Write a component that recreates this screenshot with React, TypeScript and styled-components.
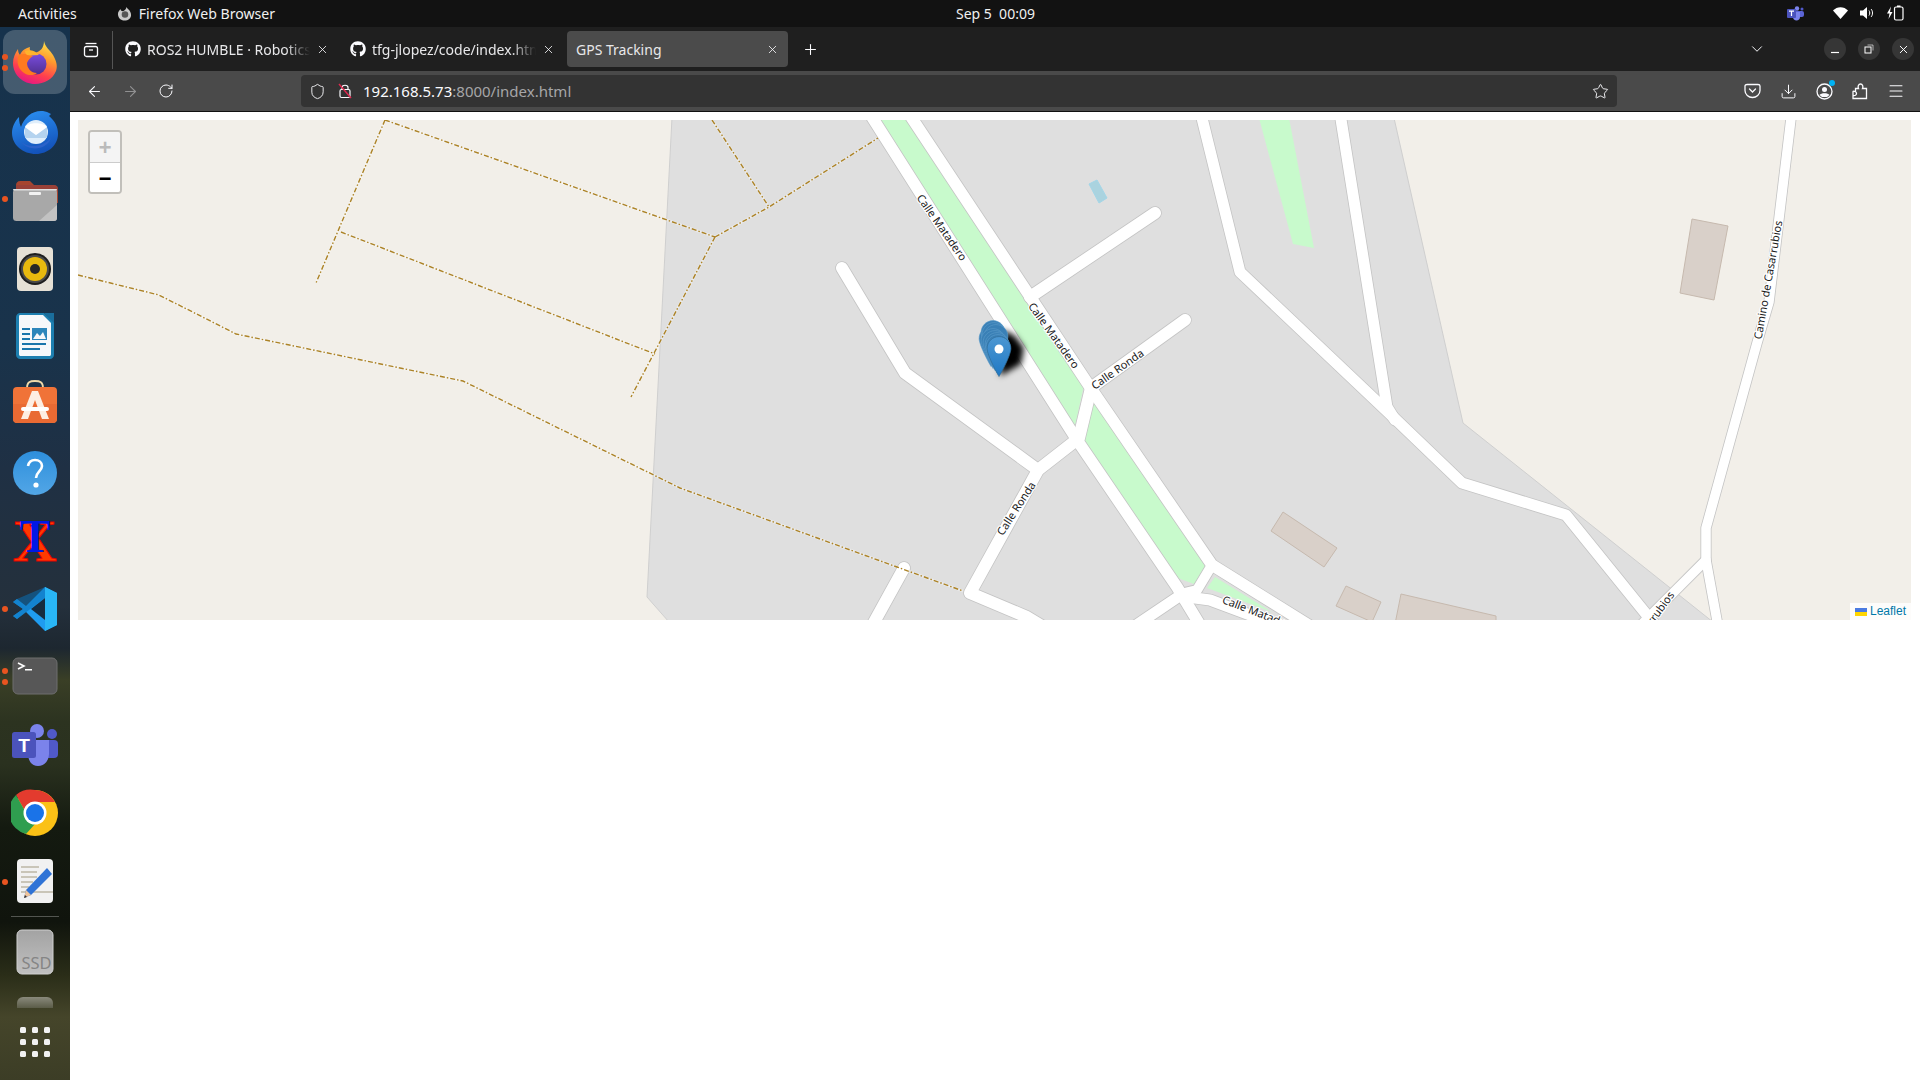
import React from 'react';
import styled, { createGlobalStyle } from 'styled-components';
import { ArrowLeft, ArrowRight, RotateCw, Plus, X, ChevronDown, Star, Download, Menu, Shield } from 'lucide-react';
import { FaGithub } from 'react-icons/fa';

const uiFont = `"Noto Sans", "Open Sans", "Liberation Sans", sans-serif`;

const GlobalStyle = createGlobalStyle`
  html, body {
    margin: 0;
    padding: 0;
    background: #fff;
  }
  #root {
    width: 1920px;
    height: 1080px;
  }
`;

const Screen = styled.div`
  width: 1920px;
  height: 1080px;
  display: flex;
  flex-direction: column;
  overflow: hidden;
  font-family: ${uiFont};
`;

/* ---------- gnome top bar ---------- */

const TopBar = styled.div`
  height: 27px;
  flex: none;
  box-sizing: border-box;
  background: #121212;
  color: #f0f0f0;
  font-size: 14.1px;
  display: grid;
  grid-template-columns: 938px auto 1fr;
  align-items: center;
  padding: 0 16px 1px 18px;
`;

const TopLeft = styled.div`
  display: flex;
  align-items: center;
`;

const AppName = styled.div`
  display: flex;
  align-items: center;
  gap: 7px;
  margin-left: 40px;
`;

const Clock = styled.div`
  white-space: pre;
  font-size: 14px;
`;

const TopRight = styled.div`
  display: flex;
  justify-content: flex-end;
  align-items: center;
  gap: 12px;
`;

const TraySpacer = styled.span`
  width: 5px;
`;

const Desktop = styled.div`
  flex: 1;
  display: flex;
  min-height: 0;
`;

/* ---------- ubuntu dock ---------- */

const Dock = styled.div`
  width: 70px;
  flex: none;
  padding-top: 1px;
  display: flex;
  flex-direction: column;
  align-items: stretch;
  position: relative;
  background: linear-gradient(
    180deg,
    #16324c 0%,
    #19334b 30%,
    #1f3044 42%,
    #24303c 55%,
    #1d2730 59%,
    #3a3f26 62%,
    #2c3320 66%,
    #2a311f 70%,
    #141a10 76%,
    #10140d 85%,
    #2a2d18 90%,
    #45452a 94%,
    #3c3d26 100%
  );
`;

const DockSlot = styled.div<{ $active?: boolean }>`
  height: 68.3px;
  flex: none;
  display: flex;
  align-items: center;
  justify-content: center;
  position: relative;

  ${(p) =>
    p.$active &&
    `
    &::before {
      content: '';
      position: absolute;
      left: 3px;
      top: 2px;
      width: 64px;
      height: 64px;
      border-radius: 12px;
      background: rgba(255, 255, 255, 0.2);
    }
  `}

  svg {
    position: relative;
  }
`;

const RunDots = styled.div`
  position: absolute;
  left: 2px;
  top: 0;
  bottom: 0;
  display: flex;
  flex-direction: column;
  justify-content: center;
  gap: 5px;
`;

const RunDot = styled.span`
  width: 6px;
  height: 6px;
  border-radius: 50%;
  background: #e95420;
`;

const DockDivider = styled.div`
  height: 1px;
  margin: 0 11px;
  background: rgba(255, 255, 255, 0.28);
  flex: none;
`;

const TrashStub = styled.div`
  width: 36px;
  height: 11px;
  margin: 12px auto 0;
  border-radius: 6px 6px 0 0;
  background: linear-gradient(180deg, #8a8a7c, #5b5c48);
`;

const GridButton = styled.div`
  display: grid;
  grid-template-columns: repeat(3, 6px);
  gap: 6px;
  justify-content: center;
  margin-top: 19px;
`;

const GridDot = styled.span`
  width: 6px;
  height: 6px;
  border-radius: 1.5px;
  background: #f2f2f2;
`;

/* ---------- firefox window ---------- */

const Browser = styled.div`
  flex: 1;
  min-width: 0;
  display: flex;
  flex-direction: column;
`;

const TabBar = styled.div`
  height: 44px;
  flex: none;
  background: #1f1f1f;
  display: flex;
  align-items: center;
  color: #fbfbfe;
`;

const ViewButton = styled.div`
  width: 42px;
  height: 38px;
  flex: none;
  margin: 2px 3px 0 0;
  display: flex;
  align-items: center;
  justify-content: center;
  border-right: 1px solid #555;
`;

const Tab = styled.div<{ $active?: boolean; $width: number }>`
  width: ${(p) => p.$width}px;
  height: 36px;
  flex: none;
  box-sizing: border-box;
  padding: 0 9px;
  margin-right: 3px;
  border-radius: 4px;
  display: flex;
  align-items: center;
  gap: 6px;
  font-size: 14px;
  background: ${(p) => (p.$active ? '#4b4b4b' : 'transparent')};
`;

const TabTitle = styled.div<{ $fade?: boolean }>`
  flex: 1;
  min-width: 0;
  white-space: nowrap;
  overflow: hidden;
  color: #e8e8ea;
  ${(p) =>
    p.$fade &&
    `
    -webkit-mask-image: linear-gradient(90deg, #000 85%, transparent 100%);
    mask-image: linear-gradient(90deg, #000 85%, transparent 100%);
  `}
`;

const TabBarSpacer = styled.div`
  flex: 1;
`;

const NewTab = styled.div`
  width: 36px;
  display: flex;
  justify-content: center;
  margin-left: 1px;
`;

const WindowButtons = styled.div`
  display: flex;
  gap: 12px;
  margin: 0 6px 0 58px;
`;

const WindowButton = styled.div`
  width: 22px;
  height: 22px;
  border-radius: 50%;
  background: #363636;
  display: flex;
  align-items: center;
  justify-content: center;
`;

const NavBar = styled.div`
  height: 40px;
  flex: none;
  box-sizing: content-box;
  background: #4a4a4a;
  border-bottom: 1px solid #111;
  display: flex;
  align-items: center;
  color: #fbfbfe;
`;

const NavButton = styled.div<{ $dim?: boolean }>`
  width: 36px;
  height: 32px;
  flex: none;
  display: flex;
  align-items: center;
  justify-content: center;
  opacity: ${(p) => (p.$dim ? 0.4 : 1)};
  position: relative;
`;

const NavLeft = styled.div`
  display: flex;
  width: 231px;
  flex: none;
  padding-left: 6px;
  box-sizing: border-box;
`;

const UrlBar = styled.div`
  width: 1316px;
  height: 32px;
  flex: none;
  background: #333;
  border-radius: 4px;
  display: flex;
  align-items: center;
  box-sizing: border-box;
  padding: 0 8px;
  font-size: 15px;
`;

const UrlIcons = styled.div`
  display: flex;
  align-items: center;
  gap: 11px;
  margin-right: 10px;
`;

const UrlHost = styled.span`
  color: #fbfbfe;
`;

const UrlPath = styled.span`
  color: #a6a6a8;
`;

const UrlStar = styled.div`
  margin-left: auto;
  display: flex;
`;

const NavRight = styled.div`
  display: flex;
  gap: 0;
  margin-left: 117px;
`;

const AccountBadge = styled.span`
  position: absolute;
  width: 6px;
  height: 6px;
  top: 5px;
  right: 7px;
  border-radius: 50%;
  background: #00b3f4;
`;

const Page = styled.div`
  flex: 1;
  background: #fff;
  padding: 8px 9px 0 8px;
`;

/* ---------- leaflet map ---------- */

const MapPane = styled.div`
  position: relative;
  height: 500px;
  overflow: hidden;
  background: #f2efe9;
`;

const MapCanvas = styled.svg`
  display: block;
  width: 100%;
  height: 100%;
`;

const ZoomControl = styled.div`
  position: absolute;
  left: 10px;
  top: 10px;
  width: 30px;
  border: 2px solid rgba(0, 0, 0, 0.2);
  border-radius: 4px;
  background-clip: padding-box;
  overflow: hidden;
`;

const ZoomButton = styled.div<{ $disabled?: boolean }>`
  height: 30px;
  box-sizing: border-box;
  padding-top: 5px;
  display: flex;
  align-items: center;
  justify-content: center;
  background: ${(p) => (p.$disabled ? '#f4f4f4' : '#fff')};
  color: ${(p) => (p.$disabled ? '#bbb' : '#000')};
  font: bold 22px 'Liberation Mono', monospace;
  & + & {
    border-top: 1px solid #ccc;
  }
`;

const Attribution = styled.div`
  position: absolute;
  right: 0;
  bottom: 0;
  padding: 0 5px;
  background: rgba(255, 255, 255, 0.8);
  font: 12px/17px 'Liberation Sans', Arial, sans-serif;
  color: #0078a8;
  display: flex;
  align-items: center;
  gap: 3px;
`;

const StreetLabel = styled.text`
  font-family: ${uiFont};
  font-size: 11px;
  fill: #1c1c1c;
  stroke: #fff;
  stroke-width: 2.4px;
  paint-order: stroke;
  stroke-linejoin: round;
  text-anchor: middle;
  dominant-baseline: middle;
`;

const roads: { d: string; w: number }[] = [
  { d: 'M867.500 110L1077 440L1177 587L1200 625', w: 11.500 },
  { d: 'M906.500 110L1090 387L1212 565L1310 626', w: 11.500 },
  { d: 'M1091 388L1079 438L1038 470L970 593L1027 617L1045 628', w: 12 },
  { d: 'M1092 387L1185 320', w: 12 },
  { d: 'M1030 297L1155 213', w: 12 },
  { d: 'M842 268L905 373L1038 470', w: 12 },
  { d: 'M904 568L872 626', w: 12 },
  { d: 'M1212 565L1197 590L1180 594', w: 10 },
  { d: 'M1180 596L1210 600L1290 630', w: 11 },
  { d: 'M1178 597L1135 626', w: 11 },
  { d: 'M1200 110L1240 272L1389 413L1462 483L1566 515L1655 625', w: 11 },
  { d: 'M1339.500 110L1387 407L1395 420', w: 11 },
  { d: 'M1792 110L1769 302L1757 343L1706 528L1706 560L1718 626', w: 9.500 },
  { d: 'M1706 560L1640 626', w: 9.500 },
];

const tracks = [
  'M385 120L715 237',
  'M385 120L316 283',
  'M341 232L655 354',
  'M715 237L631 397',
  'M712 120L769 207',
  'M715 237L769 207L878 138',
  'M78 275L159 295L236 334L463 381L680 488L897 567L963 591',
];

const buildings = [
  '1283,512 1337,548 1324,567 1271,531',
  '1346,586 1381,602 1372,622 1336,606',
  '1401,594 1496,616 1496,624 1395,624',
  '1692,219 1728,226 1714,300 1680,293',
];

const greens = [
  '875,118 907,118 1084,385 1075,426',
  '1095,400 1210,565 1194,584 1175,577 1082,438',
  '1207,588 1215,577 1272,612',
  '1259,118 1289,118 1314,248 1293,244',
];

const labels: { text: string; x: number; y: number; r: number }[] = [
  { text: 'Calle Matadero', x: 941, y: 228, r: 55 },
  { text: 'Calle Matadero', x: 1053, y: 336, r: 54 },
  { text: 'Calle Ronda', x: 1118, y: 370, r: -35 },
  { text: 'Calle Ronda', x: 1017, y: 509, r: -57 },
  { text: 'Calle Matadero', x: 1259, y: 614, r: 21 },
  { text: 'Camino de Casarrubios', x: 1769, y: 280, r: -80 },
  { text: 'Camino de Casarrubios', x: 1637, y: 642, r: -54 },
];

const PIN = 'M12.5 .6C5.9 .6 .6 5.9 .6 12.5C.6 20 12.5 40.5 12.5 40.5S24.4 20 24.4 12.5C24.4 5.9 19.1 .6 12.5 .6Z';
// older positions of the tracked robot, offsets from the newest marker
const pinTrail = [
  [-8, -10],
  [-6, -16],
  [-5, -14],
  [-3, -12],
  [-6, -8],
  [-4, -6],
  [-2, -4],
  [-1, -2],
];

function GpsMap() {
  return (
    <MapCanvas viewBox="78 120 1833 500">
      <defs>
        <linearGradient id="pinTop" x1="0" y1="0" x2="0" y2="1">
          <stop offset="0" stopColor="#4c97d2" />
          <stop offset="1" stopColor="#1f78c4" />
        </linearGradient>
        <filter id="pinShadow" x="-50%" y="-50%" width="200%" height="200%">
          <feGaussianBlur stdDeviation="3" />
        </filter>
      </defs>
      <polygon
        points="672,118 1394,118 1463,423 1713,622 669,622 647,597"
        fill="#dfdfdf"
        stroke="#cfcfcf"
      />
      {greens.map((p) => (
        <polygon key={p} points={p} fill="#c8facc" />
      ))}
      <polygon points="1089,184 1097,180 1107,198 1099,203" fill="#aad3df" stroke="#a3d6e8" />
      {buildings.map((p) => (
        <polygon key={p} points={p} fill="#d9d0c9" stroke="#c6b9ae" />
      ))}
      <g fill="none" strokeLinecap="round" strokeLinejoin="round">
        {roads.map((r) => (
          <path key={r.d + 'c'} d={r.d} stroke="#c4c4c4" strokeWidth={r.w + 1.6} />
        ))}
        {roads.map((r) => (
          <path key={r.d} d={r.d} stroke="#fff" strokeWidth={r.w} />
        ))}
      </g>
      <g fill="none">
        {tracks.map((d) => (
          <path key={d + 'h'} d={d} stroke="#fff" strokeOpacity={0.35} strokeWidth={2.6} />
        ))}
        {tracks.map((d) => (
          <path key={d} d={d} stroke="#ac8327" strokeWidth={1.4} strokeDasharray="5 2 1.5 2" />
        ))}
      </g>
      {labels.map((l) => (
        <StreetLabel key={l.x} x={l.x} y={l.y} transform={`rotate(${l.r} ${l.x} ${l.y})`}>
          {l.text}
        </StreetLabel>
      ))}
      <polygon
        points="1000,376 1021,364 1024,348 1015,336 1003,330"
        fill="#000"
        filter="url(#pinShadow)"
      />
      {pinTrail.map(([dx, dy]) => (
        <path
          key={`${dx}${dy}`}
          d={PIN}
          transform={`translate(${986.5 + dx} ${336 + dy})`}
          fill="#3a80b6"
          stroke="#5c9ccb"
          strokeWidth={0.6}
        />
      ))}
      <g transform="translate(986.5 336)">
        <path d={PIN} fill="url(#pinTop)" stroke="#2e6c97" strokeWidth={0.7} />
        <circle cx="12.5" cy="13" r="4.5" fill="#fff" />
      </g>
    </MapCanvas>
  );
}

/* ---------- dock icons ---------- */

const FirefoxIcon = () => (
  <svg width="48" height="48" viewBox="0 0 48 48">
    <defs>
      <linearGradient id="ffBody" x1="0.7" y1="0" x2="0.3" y2="1">
        <stop offset="0" stopColor="#ffe14a" />
        <stop offset="0.35" stopColor="#ff9a2e" />
        <stop offset="0.7" stopColor="#ff3f4e" />
        <stop offset="1" stopColor="#e31587" />
      </linearGradient>
      <linearGradient id="ffCore" x1="0.5" y1="0" x2="0.5" y2="1">
        <stop offset="0" stopColor="#7a4de0" />
        <stop offset="1" stopColor="#50308f" />
      </linearGradient>
    </defs>
    <path
      d="M33 3C34 9 39 12 42 17C45 22 47 28 45 33C42 41 33 46 24 46C12 46 2 37 2 25C2 20 4 15 7 11C7 14 8 16 9 17C11 12 15 10 19 9C18 12 20 14 23 15C30 14 33 9 33 3Z"
      fill="url(#ffBody)"
    />
    <circle cx="25" cy="26" r="10.5" fill="url(#ffCore)" />
    <path
      d="M8 17C12 15 18 16 22 18C19 20 17 22 16 25C16 30 20 35 26 35C21 39 13 37 9 31C6 26 6 21 8 17Z"
      fill="#ff7a1f"
    />
    <path d="M14 13C19 11 25 13 28 17C24 17 19 18 16 17C15 16 14 15 14 13Z" fill="#ffb32c" />
  </svg>
);

const ThunderbirdIcon = () => (
  <svg width="48" height="48" viewBox="0 -2 48 48">
    <defs>
      <linearGradient id="tbBlue" x1="0.3" y1="0" x2="0.6" y2="1">
        <stop offset="0" stopColor="#2a8ef0" />
        <stop offset="1" stopColor="#1250b8" />
      </linearGradient>
    </defs>
    <path
      d="M8 9C8 14 9 17 10 19C13 9 22 2 32 3L36 4L40 6L38 8C44 13 47 19 47 26C47 37 37 46 25 46C12 46 1 37 1 25C1 19 4 13 8 9Z"
      fill="url(#tbBlue)"
    />
    <circle cx="25" cy="24" r="12" fill="#dfeefb" />
    <path d="M14 19L25 27L36 19L36 30L14 30Z" fill="#b4d3ef" />
    <path d="M14 19C18 14 32 14 36 19L25 27Z" fill="#fff" />
    <path d="M10 34C16 39 30 41 40 30C36 42 18 44 10 34Z" fill="#2b62c9" />
  </svg>
);

const FilesIcon = () => (
  <svg width="48" height="48" viewBox="0 -2 48 48">
    <path
      d="M5 8C5 5.800 6.800 4 9 4H19L23 8H43C45 8 47 9.500 47 12V26H5Z"
      fill="#a6452f"
    />
    <path d="M5 8H23L43 8C45 8 47 9 47 12V14H5Z" fill="#91403f" opacity="0.6" />
    <rect x="2" y="12" width="44" height="32" rx="3.500" fill="#a8a8a8" />
    <rect x="2" y="12" width="44" height="1.500" rx="0.700" fill="#e0e0e0" />
    <path d="M46 28V41C46 43 45 44 43 44H28Z" fill="#c2c2c2" />
    <rect x="18" y="15" width="12" height="3" rx="1" fill="#f2f2f2" />
  </svg>
);

const RhythmboxIcon = () => (
  <svg width="48" height="48" viewBox="0 -2 48 48">
    <rect x="6" y="2" width="36" height="44" rx="4" fill="#e6e1d6" />
    <circle cx="24" cy="24" r="16" fill="#1e1e1e" />
    <circle cx="24" cy="24" r="14" fill="#4a4a4a" />
    <circle cx="24" cy="24" r="12" fill="#e8b90e" />
    <circle cx="24" cy="24" r="5" fill="#272727" />
  </svg>
);

const WriterIcon = () => (
  <svg width="48" height="48" viewBox="0 -1 48 48">
    <path d="M9 1H33L43 10V43C43 45 41 47 39 47H9C7 47 5 45 5 43V5C5 3 7 1 9 1Z" fill="#1d7fb0" />
    <path d="M9 3H32L40 11V42C40 43.500 39.500 44 38 44H10C8.500 44 8 43.500 8 42V5C8 3.500 8.500 3 9 3Z" fill="#f6f8fa" />
    <path d="M33 1L43 1V11Z" fill="#1a6e9c" />
    <rect x="11" y="16" width="8" height="2" fill="#1a76ac" />
    <rect x="11" y="21" width="8" height="2" fill="#1a76ac" />
    <rect x="11" y="26" width="8" height="2" fill="#1a76ac" />
    <rect x="11" y="31" width="24" height="2" fill="#1a76ac" />
    <rect x="11" y="36" width="18" height="2" fill="#1a76ac" />
    <rect x="21" y="16" width="15" height="12" fill="#2c86bb" />
    <path d="M22 27L26 21L29 24L32 20L35 27Z" fill="#f6f8fa" />
  </svg>
);

const AppStoreIcon = () => (
  <svg width="48" height="48" viewBox="0 0 48 48">
    <path d="M16 8C16 2 19 1 24 1C29 1 32 2 32 8" fill="none" stroke="#efd9a9" strokeWidth="1.800" />
    <rect x="2" y="7" width="44" height="36" rx="4" fill="#f07338" />
    <path d="M2 24H46V39C46 41 44 43 42 43H6C4 43 2 41 2 39Z" fill="#e96a33" />
    <path d="M21 11H27L38 39H31L24 20L17 39H10Z" fill="#fdeee3" />
    <rect x="10" y="27" width="28" height="4" rx="2" fill="#fff" />
  </svg>
);

const HelpIcon = () => (
  <svg width="48" height="48" viewBox="0 -1 48 48">
    <defs>
      <linearGradient id="helpBlue" x1="0" y1="0" x2="0" y2="1">
        <stop offset="0" stopColor="#2e8fdc" />
        <stop offset="1" stopColor="#52a6e6" />
      </linearGradient>
    </defs>
    <circle cx="24" cy="24" r="22" fill="url(#helpBlue)" />
    <path
      d="M17 17C18 12 21 11 24 11C28 11 31 13.500 31 17C31 22 25 23 25 29"
      fill="none"
      stroke="#fff"
      strokeWidth="2.600"
    />
    <circle cx="25" cy="36" r="2.600" fill="#fff" />
  </svg>
);

const XournalIcon = () => (
  <svg width="48" height="48" viewBox="0 0 48 48">
    <text
      x="2"
      y="45"
      textLength="44"
      lengthAdjust="spacingAndGlyphs"
      fontFamily="Liberation Serif"
      fontWeight="bold"
      fontSize="60"
      fill="#ff3a00"
      stroke="#ee0000"
      strokeWidth="1"
    >
      X
    </text>
    <text
      x="24"
      y="36"
      textAnchor="middle"
      fontFamily="Liberation Serif"
      fontWeight="bold"
      fontSize="46"
      fill="#0018e6"
    >
      T
    </text>
  </svg>
);

const VsCodeIcon = () => (
  <svg width="48" height="48" viewBox="0 0 48 48">
    <path d="M34 2L46 8V40L34 46L15 27L6 34L2 31L12 24L2 17L6 14L15 21Z" fill="#1f9cf0" />
    <path d="M34 2L46 8V40L34 46Z" fill="#29b6f6" />
    <path d="M34 13V35L20 24Z" fill="#15202b" opacity="0.9" />
    <path d="M6 14L2 17L12 24L2 31L6 34L34 13V2Z" fill="#0a6fb5" opacity="0.55" />
  </svg>
);

const TerminalIcon = () => (
  <svg width="48" height="48" viewBox="0 -2 48 48">
    <rect x="2" y="3" width="44" height="36" rx="5" fill="#575757" stroke="#6e6e6e" />
    <path d="M7 8L13 11L7 14" fill="none" stroke="#fff" strokeWidth="1.600" />
    <rect x="14" y="14" width="7" height="1.500" fill="#fff" />
  </svg>
);

const TeamsIcon = () => (
  <svg width="48" height="48" viewBox="0 1 48 48">
    <circle cx="26" cy="11" r="7" fill="#7b83eb" />
    <circle cx="41" cy="14" r="5" fill="#5059c9" />
    <rect x="33" y="20" width="14" height="18" rx="4" fill="#5059c9" />
    <path d="M17 20H38V34C38 41 33 46 27 46C21 46 17 41 17 34Z" fill="#7b83eb" />
    <rect x="1" y="12" width="24" height="26" rx="2.500" fill="#4b53bc" />
    <text
      x="13"
      y="32"
      textAnchor="middle"
      fontFamily="Liberation Sans"
      fontWeight="bold"
      fontSize="19"
      fill="#fff"
    >
      T
    </text>
  </svg>
);

const ChromeIcon = () => (
  <svg width="48" height="48" viewBox="0 0 48 48">
    <circle cx="24" cy="24" r="23" fill="#fbc116" />
    <path d="M24 1A23 23 0 0 1 44 13H24A11 11 0 0 0 13.500 21L5 6A23 23 0 0 1 24 1Z" fill="#e33b2e" />
    <path d="M5 6L14 22A11 11 0 0 0 24 35L15 45A23 23 0 0 1 5 6Z" fill="#2f9e4f" />
    <circle cx="24" cy="24" r="11.500" fill="#fff" />
    <circle cx="24" cy="24" r="9" fill="#1a73e8" />
  </svg>
);

const GeditIcon = () => (
  <svg width="48" height="48" viewBox="0 1 48 48">
    <rect x="6" y="2" width="36" height="44" rx="4" fill="#f1f1f1" />
    <path d="M10 10H28M10 15H26M10 20H26M10 25H22M10 30H18M10 35H42" stroke="#c9c5b8" strokeWidth="1.800" />
    <path d="M36 11L41 17L20 38L13 41L15 33Z" fill="#2f73d6" />
    <path d="M15 33L20 38L13 41Z" fill="#eec39a" />
    <path d="M13 41L14 38L16 40Z" fill="#333" />
  </svg>
);

const SsdIcon = () => (
  <svg width="48" height="48" viewBox="0 -1 48 48">
    <defs>
      <linearGradient id="ssdBody" x1="0" y1="0" x2="0" y2="1">
        <stop offset="0" stopColor="#a3a3a3" />
        <stop offset="1" stopColor="#c0c0c0" />
      </linearGradient>
    </defs>
    <rect x="6" y="2" width="36" height="44" rx="5" fill="url(#ssdBody)" stroke="#d0d0d0" />
    <text x="10.500" y="41" fontFamily="Noto Sans" fontSize="16.500" fill="#858585">
      SSD
    </text>
  </svg>
);

const dockApps: { key: string; icon: React.ReactNode; dots?: number; active?: boolean }[] = [
  { key: 'firefox', icon: <FirefoxIcon />, dots: 2, active: true },
  { key: 'thunderbird', icon: <ThunderbirdIcon /> },
  { key: 'files', icon: <FilesIcon />, dots: 1 },
  { key: 'rhythmbox', icon: <RhythmboxIcon /> },
  { key: 'writer', icon: <WriterIcon /> },
  { key: 'store', icon: <AppStoreIcon /> },
  { key: 'help', icon: <HelpIcon /> },
  { key: 'xournal', icon: <XournalIcon /> },
  { key: 'vscode', icon: <VsCodeIcon />, dots: 1 },
  { key: 'terminal', icon: <TerminalIcon />, dots: 2 },
  { key: 'teams', icon: <TeamsIcon /> },
  { key: 'chrome', icon: <ChromeIcon /> },
  { key: 'gedit', icon: <GeditIcon />, dots: 1 },
];

/* ---------- small chrome icons ---------- */

const TinyFirefox = () => (
  <svg width="15" height="15" viewBox="0 0 16 16">
    <path d="M10 1C11 3 15 5 15 9.500C15 13 12 15.500 8 15.500C4 15.500 1 12.500 1 8.500C1 6 3 4 4 3.500C4 5 5 5.500 6 5.500C8 5 10 3.500 10 1Z" fill="#c9c9c9" />
    <circle cx="8.500" cy="9" r="3.500" fill="#555" />
  </svg>
);

const TeamsTray = () => (
  <svg width="17" height="15" viewBox="0 0 17 15">
    <circle cx="10" cy="2.500" r="2.200" fill="#7b83eb" />
    <circle cx="15" cy="3" r="1.500" fill="#5059c9" />
    <rect x="5" y="5" width="12" height="6" rx="2" fill="#5b64d6" />
    <path d="M6 6H13V11C13 13 11.500 14.500 9.500 14.500C7.500 14.500 6 13 6 11Z" fill="#7b83eb" />
    <rect x="0" y="3" width="9" height="9" rx="1" fill="#4b53bc" />
    <path d="M2 5.200H7M4.500 5.200V10" stroke="#fff" strokeWidth="1.200" />
  </svg>
);

const WifiTray = () => (
  <svg width="15" height="12" viewBox="0 0 15 12">
    <path d="M0 3.500C4 -1 11 -1 15 3.500L7.500 12Z" fill="#fff" />
  </svg>
);

const VolumeTray = () => (
  <svg width="15" height="14" viewBox="0 0 15 14">
    <path d="M0 4.500H3L7 1V13L3 9.500H0Z" fill="#fff" />
    <path d="M9 4.500C10 5.500 10 8.500 9 9.500M11 3C13 5 13 9 11 11" fill="none" stroke="#fff" strokeWidth="1" />
  </svg>
);

const BatteryTray = () => (
  <svg width="17" height="16" viewBox="0 0 17 16">
    <path d="M4 1.500L0 8.500H2.500L1.500 14L5.500 7H3Z" fill="#fff" />
    <rect x="7.500" y="2" width="8.500" height="13" rx="1.500" fill="none" stroke="#fff" strokeWidth="1.200" />
    <rect x="10" y="0.500" width="3.500" height="1.500" fill="#fff" />
  </svg>
);

const ViewIcon = () => (
  <svg width="16" height="16" viewBox="0 0 16 16" fill="none" stroke="#fbfbfe" strokeWidth="1.300">
    <path d="M2.500 1.500H13.500" />
    <rect x="1.500" y="4.500" width="13" height="10" rx="2" />
    <path d="M6 8H10" />
  </svg>
);

const LockOff = () => (
  <svg width="16" height="16" viewBox="0 0 16 16" fill="none" stroke="#fbfbfe" strokeWidth="1.200">
    <rect x="3" y="6.500" width="10" height="8" rx="1.500" />
    <path d="M5 6.500V4.500C5 1.500 11 1.500 11 4.500V6.500" />
    <path d="M2 1L14 15" stroke="#e22850" strokeWidth="1.400" />
  </svg>
);

const PocketIcon = () => (
  <svg width="17" height="16" viewBox="0 0 17 16" fill="none" stroke="#fbfbfe" strokeWidth="1.300">
    <path d="M1 3C1 2 2 1.500 3 1.500H14C15 1.500 16 2 16 3V7.500C16 11.500 12.500 14.500 8.500 14.500C4.500 14.500 1 11.500 1 7.500Z" />
    <path d="M5.500 6L8.500 9L11.500 6" strokeLinecap="round" />
  </svg>
);

const AccountIcon = () => (
  <svg width="17" height="17" viewBox="0 0 17 17">
    <circle cx="8.500" cy="8.500" r="7.500" fill="none" stroke="#fbfbfe" strokeWidth="1.300" />
    <circle cx="8.500" cy="6.500" r="2.500" fill="#fbfbfe" />
    <path d="M3.500 12C5 9.800 12 9.800 13.500 12L11 14H6Z" fill="#fbfbfe" />
  </svg>
);

const ExtensionIcon = () => (
  <svg width="16" height="17" viewBox="0 0 16 17" fill="none" stroke="#fbfbfe" strokeWidth="1.300">
    <path d="M1 8.500V15.500H14.500V5.500H10.500C11.500 3.500 10.500 1 8.500 1C6.500 1 5.500 3.500 6.500 5.500H3.500V8.500C2 8 1 8 1 8.500ZM1 8.500C3 8 4.500 9 4.500 10.500C4.500 12 3 13 1 12.500" />
  </svg>
);

const UkraineFlag = () => (
  <svg width="12" height="8" viewBox="0 0 12 8">
    <rect width="12" height="4" fill="#4c7be1" />
    <rect y="4" width="12" height="4" fill="#ffd500" />
  </svg>
);

export default function App() {
  return (
    <>
      <GlobalStyle />
      <Screen>
        <TopBar>
          <TopLeft>
            <span>Activities</span>
            <AppName>
              <TinyFirefox />
              <span>Firefox Web Browser</span>
            </AppName>
          </TopLeft>
          <Clock>Sep 5  00:09</Clock>
          <TopRight>
            <TeamsTray />
            <TraySpacer />
            <WifiTray />
            <VolumeTray />
            <BatteryTray />
          </TopRight>
        </TopBar>
        <Desktop>
          <Dock>
            {dockApps.map((app) => (
              <DockSlot key={app.key} $active={app.active}>
                {app.dots ? (
                  <RunDots>
                    {Array.from({ length: app.dots }).map((_, i) => (
                      <RunDot key={i} />
                    ))}
                  </RunDots>
                ) : null}
                {app.icon}
              </DockSlot>
            ))}
            <DockDivider />
            <DockSlot>
              <SsdIcon />
            </DockSlot>
            <TrashStub />
            <GridButton>
              {Array.from({ length: 9 }).map((_, i) => (
                <GridDot key={i} />
              ))}
            </GridButton>
          </Dock>
          <Browser>
            <TabBar>
              <ViewButton>
                <ViewIcon />
              </ViewButton>
              <Tab $width={222}>
                <FaGithub size={16} />
                <TabTitle $fade>ROS2 HUMBLE · Robotics</TabTitle>
                <X size={13} strokeWidth={1.5} />
              </Tab>
              <Tab $width={223}>
                <FaGithub size={16} />
                <TabTitle $fade>tfg-jlopez/code/index.html</TabTitle>
                <X size={13} strokeWidth={1.5} />
              </Tab>
              <Tab $active $width={221}>
                <TabTitle>GPS Tracking</TabTitle>
                <X size={13} strokeWidth={1.5} />
              </Tab>
              <NewTab>
                <Plus size={17} strokeWidth={1.5} />
              </NewTab>
              <TabBarSpacer />
              <ChevronDown size={18} strokeWidth={1.3} />
              <WindowButtons>
                <WindowButton>
                  <svg width="10" height="10" viewBox="0 0 10 10">
                    <path d="M1 8.500H9" stroke="#fff" strokeWidth="1.200" />
                  </svg>
                </WindowButton>
                <WindowButton>
                  <svg width="10" height="10" viewBox="0 0 10 10" fill="none" stroke="#fff">
                    <rect x="1" y="3" width="6" height="6" />
                    <path d="M3.500 1H9V6.500" strokeOpacity="0.6" />
                  </svg>
                </WindowButton>
                <WindowButton>
                  <X size={13} strokeWidth={1.8} color="#fff" />
                </WindowButton>
              </WindowButtons>
            </TabBar>
            <NavBar>
              <NavLeft>
                <NavButton>
                  <ArrowLeft size={17} strokeWidth={1.5} />
                </NavButton>
                <NavButton $dim>
                  <ArrowRight size={17} strokeWidth={1.5} />
                </NavButton>
                <NavButton>
                  <RotateCw size={16} strokeWidth={1.5} />
                </NavButton>
              </NavLeft>
              <UrlBar>
                <UrlIcons>
                  <Shield size={17} strokeWidth={1.3} />
                  <LockOff />
                </UrlIcons>
                <UrlHost>192.168.5.73</UrlHost>
                <UrlPath>:8000/index.html</UrlPath>
                <UrlStar>
                  <Star size={17} strokeWidth={1.3} />
                </UrlStar>
              </UrlBar>
              <NavRight>
                <NavButton>
                  <PocketIcon />
                </NavButton>
                <NavButton>
                  <Download size={17} strokeWidth={1.4} />
                </NavButton>
                <NavButton>
                  <AccountIcon />
                  <AccountBadge />
                </NavButton>
                <NavButton>
                  <ExtensionIcon />
                </NavButton>
                <NavButton>
                  <Menu size={18} strokeWidth={1.4} />
                </NavButton>
              </NavRight>
            </NavBar>
            <Page>
              <MapPane>
                <GpsMap />
                <ZoomControl>
                  <ZoomButton $disabled>+</ZoomButton>
                  <ZoomButton>−</ZoomButton>
                </ZoomControl>
                <Attribution>
                  <UkraineFlag />
                  <span>Leaflet</span>
                </Attribution>
              </MapPane>
            </Page>
          </Browser>
        </Desktop>
      </Screen>
    </>
  );
}
